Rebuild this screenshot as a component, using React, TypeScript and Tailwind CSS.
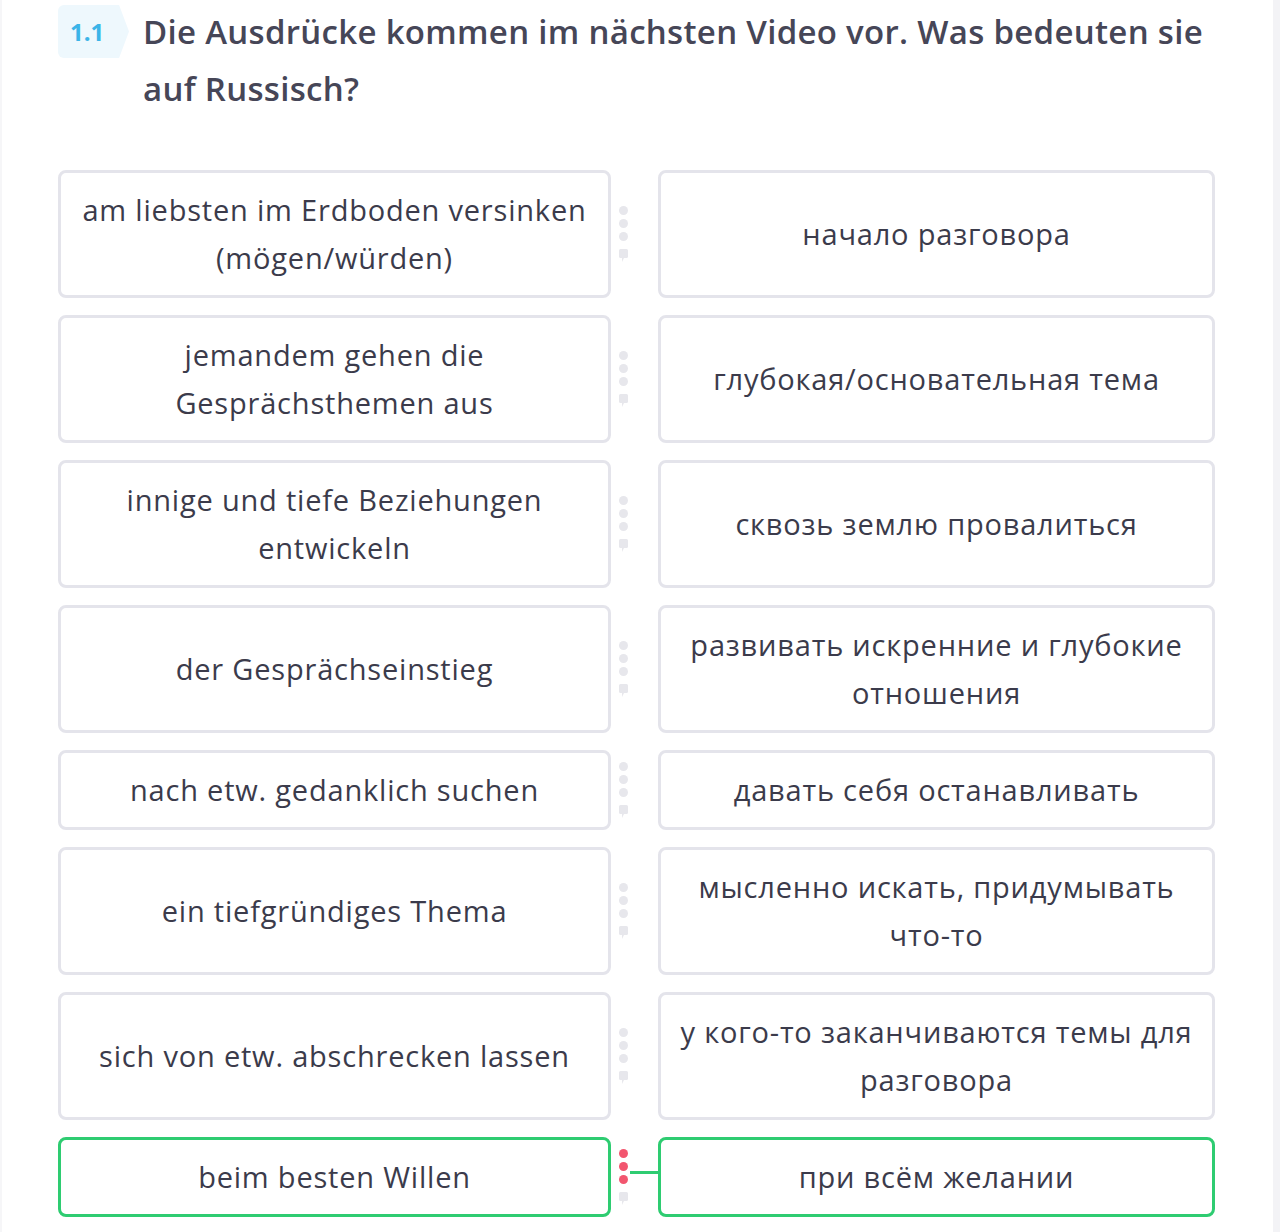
const pairs: [string, string][] = [
  ["am liebsten im Erdboden versinken (mögen/würden)", "начало разговора"],
  ["jemandem gehen die Gesprächsthemen aus", "глубокая/основательная тема"],
  ["innige und tiefe Beziehungen entwickeln", "сквозь землю провалиться"],
  ["der Gesprächseinstieg", "развивать искренние и глубокие отношения"],
  ["nach etw. gedanklich suchen", "давать себя останавливать"],
  ["ein tiefgründiges Thema", "мысленно искать, придумывать что-то"],
  ["sich von etw. abschrecken lassen", "у кого-то заканчиваются темы для разговора"],
  ["beim besten Willen", "при всём желании"],
];

function Handle({ linked }: { linked: boolean }) {
  const dot = linked ? "bg-[#f2566f]" : "bg-[#e7e7ec]";
  return (
    <div className="relative flex w-[47px] items-center pl-[8px]">
      <div className="flex flex-col items-center gap-[4px]">
        <span className={`h-[9px] w-[9px] rounded-full ${dot}`} />
        <span className={`h-[9px] w-[9px] rounded-full ${dot}`} />
        <span className={`h-[9px] w-[9px] rounded-full ${dot}`} />
        <svg width="9" height="13" viewBox="0 0 9 13" className="mt-[4px]">
          <path
            d="M1.5 0h6A1.5 1.5 0 0 1 9 1.5v6A1.5 1.5 0 0 1 7.5 9H5l-2 4V9H1.5A1.5 1.5 0 0 1 0 7.5v-6A1.5 1.5 0 0 1 1.5 0z"
            fill="#e7e7ec"
          />
        </svg>
      </div>
      {linked && (
        <div className="absolute right-0 top-1/2 mt-[-6px] h-[3px] w-[28px] bg-[#2ecc71]" />
      )}
    </div>
  );
}

function Card({ text, linked, className }: { text: string; linked: boolean; className: string }) {
  return (
    <div
      className={`flex items-center justify-center rounded-lg border-[3px] px-4 py-[13px] text-center text-[29px] leading-[48px] tracking-[0.8px] text-[#3b3b4b] ${
        linked ? "border-[#2ecc71]" : "border-[#e4e4eb]"
      } ${className}`}
    >
      {text}
    </div>
  );
}

export default function App() {
  return (
    <div className="flex min-h-screen bg-white font-['Open_Sans',sans-serif]">
      <main className="w-[1273px] border-l-2 border-[#f6f6f8] pl-[56px] pt-[3px]">
        <div className="flex items-start gap-[14px]">
          <div className="mt-[2px] flex h-[53px] w-[71px] shrink-0 items-center rounded-l-md bg-[#eef8fd] pl-[12px] text-[24px] font-bold text-[#3bb4e8] [clip-path:polygon(0_0,86%_0,100%_50%,86%_100%,0_100%)]">
            1.1
          </div>
          <h1 className="w-[1075px] text-[33px] font-semibold leading-[57px] tracking-[0.3px] text-[#464657]">
            Die Ausdrücke kommen im nächsten Video vor. Was bedeuten sie
            <br />
            auf Russisch?
          </h1>
        </div>

        <div className="mt-[53px] flex w-[1157px] flex-col gap-[17px]">
          {pairs.map(([de, ru], i) => {
            const linked = i === pairs.length - 1;
            return (
              <div key={de} className="flex items-stretch">
                <Card text={de} linked={linked} className="w-[553px]" />
                <Handle linked={linked} />
                <Card text={ru} linked={linked} className="flex-1" />
              </div>
            );
          })}
        </div>
      </main>
      <div className="w-[7px] bg-[#f3f3f6]" />
    </div>
  );
}
